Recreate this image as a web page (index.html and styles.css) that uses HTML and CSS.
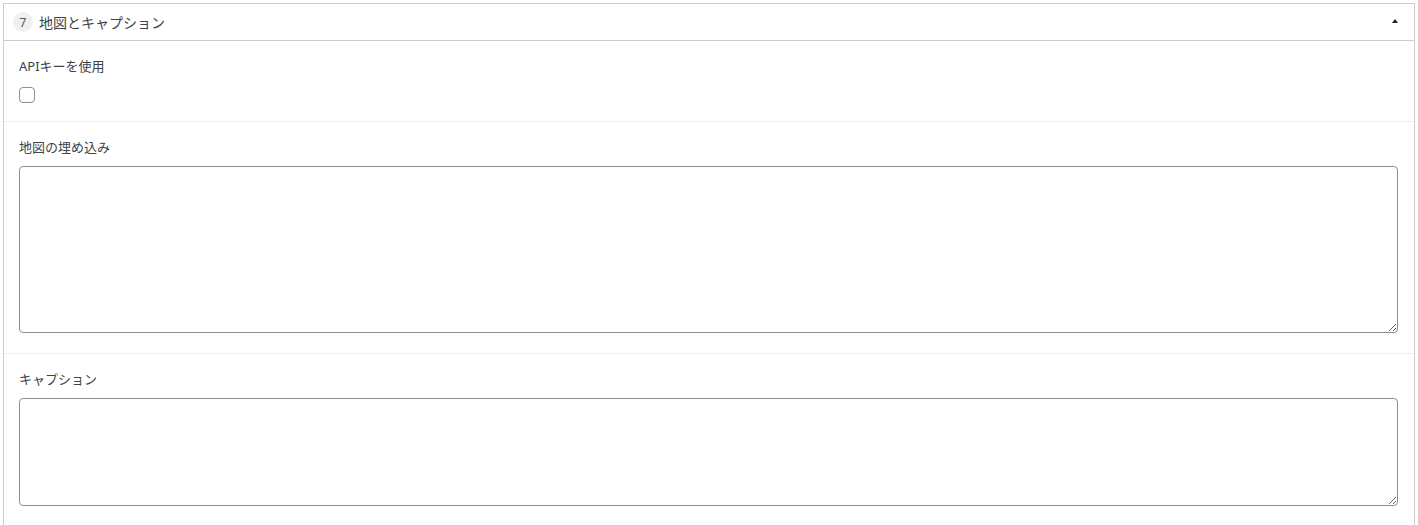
FILE: index.html
```html
<!DOCTYPE html>
<html lang="ja">
<head>
  <meta charset="UTF-8">
  <meta name="viewport" content="width=device-width, initial-scale=1.0">
  <title>地図とキャプション</title>
  <link rel="stylesheet" href="styles.css">
</head>
<body>
  <div class="panel">
    <div class="panel-head">
      <span class="badge">7</span>
      <span class="panel-title">地図とキャプション</span>
      <span class="toggle"></span>
    </div>
    <div class="field field-check">
      <label class="field-label" for="apiKey">APIキーを使用</label>
      <div class="check-wrap">
        <input type="checkbox" id="apiKey" class="check">
      </div>
    </div>
    <div class="field">
      <label class="field-label" for="mapEmbed">地図の埋め込み</label>
      <textarea id="mapEmbed" class="text-box map-box"></textarea>
    </div>
    <div class="field">
      <label class="field-label" for="caption">キャプション</label>
      <textarea id="caption" class="text-box caption-box"></textarea>
    </div>
  </div>
</body>
</html>
```

FILE: styles.css
```css
body {
  margin: 0;
  padding: 3px 3px 0;
  background-color: #fff;
  font-family: "Segoe UI", "Noto Sans", "Noto Sans CJK JP", sans-serif;
  color: #3c434a;
}
.panel {
  border: 1px solid #ccc;
  border-bottom: none;
  background-color: #fff;
}
.panel-head {
  display: flex;
  align-items: center;
  height: 36px;
  padding: 0 0 0 9px;
  border-bottom: 1px solid #ccc;
}
.badge {
  display: flex;
  align-items: center;
  justify-content: center;
  width: 20px;
  height: 20px;
  border-radius: 50%;
  background-color: #f0f0f1;
  color: #50575e;
  font-size: 12px;
  margin-right: 6px;
}
.panel-title {
  flex: 1;
  font-size: 14px;
  color: #3c434a;
}
.toggle {
  width: 0;
  height: 0;
  border-left: 3px solid transparent;
  border-right: 3px solid transparent;
  border-bottom: 4px solid #1d2327;
  margin-right: 16px;
  margin-top: -2px;
}
.field {
  padding: 15px 16px 20px 15px;
  border-bottom: 1px solid #eee;
}
.field-check {
  padding-bottom: 18px;
}
.field-label {
  display: block;
  font-size: 13px;
  line-height: 20px;
  color: #3c434a;
  margin-bottom: 9px;
}
.check-wrap {
  display: flex;
  height: 16px;
  padding-top: 2px;
}
.check {
  appearance: none;
  margin: 0;
  width: 16px;
  height: 16px;
  border: 1px solid #8c8f94;
  border-radius: 4px;
  background-color: #fff;
}
.text-box {
  display: block;
  box-sizing: border-box;
  width: 100%;
  margin: 0;
  padding: 6px 8px;
  border: 1px solid #8c8f94;
  border-radius: 4px;
  font-family: inherit;
  font-size: 14px;
  resize: vertical;
}
.map-box {
  height: 167px;
}
.caption-box {
  height: 108px;
}
```
